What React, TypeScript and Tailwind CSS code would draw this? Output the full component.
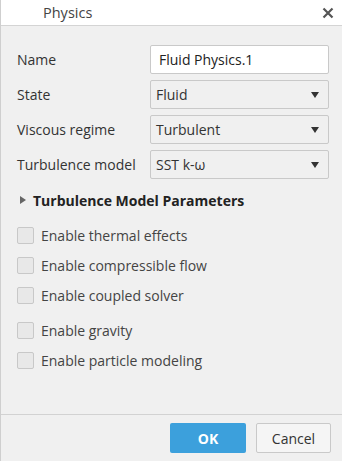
import React from 'react';

const font = { fontFamily: '"Open Sans", "Noto Sans", sans-serif' };

function SelectBox({ value }: { value: string }) {
  return (
    <div className="flex h-[29px] w-[179px] shrink-0 items-center justify-between rounded-[2px] border border-[#c9c9c9] bg-[#f0f0f0] pl-[5px] pr-[9px] text-[14px] text-[#333]">
      <span>{value}</span>
      <svg width="8" height="6" viewBox="0 0 8 6">
        <path d="M0 0 H8 L4 6 Z" fill="#333" />
      </svg>
    </div>
  );
}

function Row({ label, children }: { label: string; children: React.ReactNode }) {
  return (
    <div className="flex h-[29px] items-center">
      <div className="w-[133px] shrink-0 text-[14px] text-[#333]">{label}</div>
      {children}
    </div>
  );
}

function Check({ label }: { label: string }) {
  return (
    <div className="flex h-[17px] items-center gap-[7px]">
      <div className="h-[17px] w-[17px] rounded-[2px] border border-[#c8c8c8] bg-[#e8e8e8]" />
      <span className="text-[14px] text-[#444]">{label}</span>
    </div>
  );
}

export default function App() {
  return (
    <div className="flex h-[461px] w-[342px] flex-col border-l border-[#cfcfcf] bg-[#f0f0f0]" style={font}>
      <div className="flex h-[26px] items-center justify-between border-b border-[#d4d4d4] bg-white pl-[42px] pr-[8px]">
        <span className="text-[14.5px] text-[#444]">Physics</span>
        <svg width="12" height="12" viewBox="0 0 12 12">
          <path d="M1.5 1.5 L10.5 10.5 M10.5 1.5 L1.5 10.5" stroke="#555" strokeWidth="2.2" />
        </svg>
      </div>

      <div className="flex flex-1 flex-col pl-[16px] pt-[19px]">
        <div className="flex flex-col gap-[6px]">
          <Row label="Name">
            <div className="flex h-[29px] w-[179px] shrink-0 items-center rounded-[2px] border border-[#c9c9c9] bg-white pl-[8px] text-[14px] text-[#222]">
              Fluid Physics.1
            </div>
          </Row>
          <Row label="State">
            <SelectBox value="Fluid" />
          </Row>
          <Row label="Viscous regime">
            <SelectBox value="Turbulent" />
          </Row>
          <Row label="Turbulence model">
            <SelectBox value="SST k-ω" />
          </Row>
        </div>

        <div className="mt-[12px] flex h-[18px] items-center gap-[7px] pl-[3px]">
          <svg width="6" height="8" viewBox="0 0 6 8">
            <path d="M0 0 L6 4 L0 8 Z" fill="#666" />
          </svg>
          <span className="text-[14px] font-bold text-[#222]">Turbulence Model Parameters</span>
        </div>

        <div className="mt-[18px] flex flex-col gap-[13px]">
          <Check label="Enable thermal effects" />
          <Check label="Enable compressible flow" />
          <Check label="Enable coupled solver" />
        </div>
        <div className="mt-[18px] flex flex-col gap-[13px]">
          <Check label="Enable gravity" />
          <Check label="Enable particle modeling" />
        </div>
      </div>

      <div className="flex h-[47px] items-center justify-end gap-[10px] border-t border-[#d2d2d2] pr-[11px]">
        <button className="h-[30px] w-[76px] rounded-[2px] bg-[#3ca0dc] text-[14px] font-bold text-white">OK</button>
        <button className="h-[30px] w-[75px] rounded-[2px] border border-[#c9c9c9] bg-[#f5f5f5] text-[14px] text-[#333]">Cancel</button>
      </div>
    </div>
  );
}
